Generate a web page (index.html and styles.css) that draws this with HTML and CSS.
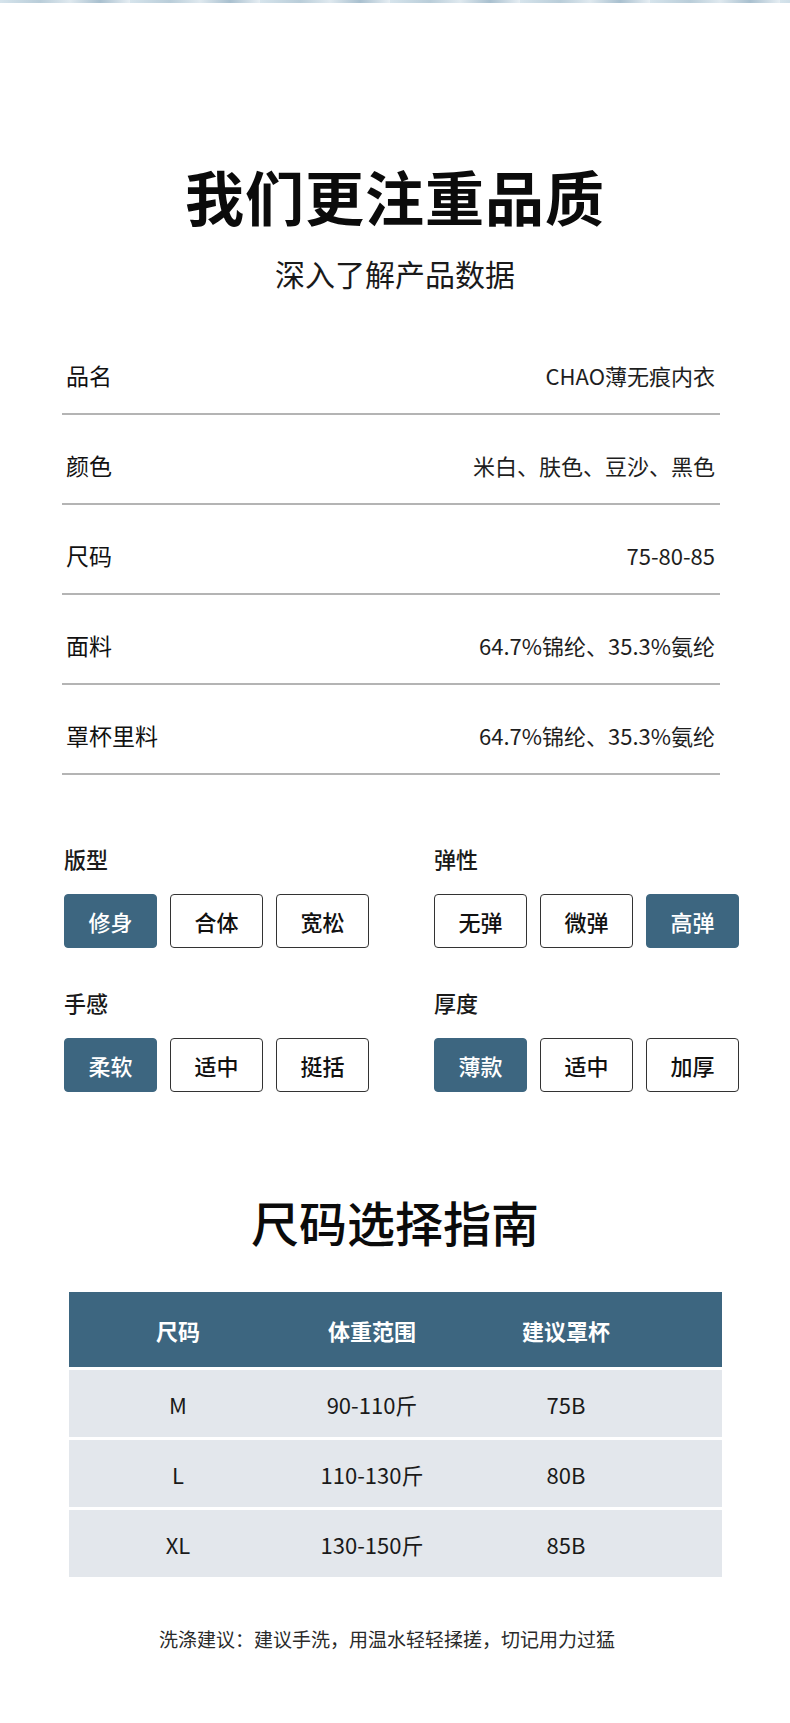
FILE: index.html
```html
<!DOCTYPE html>
<html lang="zh-CN">
<head>
<meta charset="utf-8">
<title>我们更注重品质</title>
<link rel="stylesheet" href="styles.css">
</head>
<body>
<div class="page">
  <div class="top-stripe"></div>

  <header class="hero">
    <h1 class="hero-title">我们更注重品质</h1>
    <p class="hero-sub">深入了解产品数据</p>
  </header>

  <section class="specs">
    <div class="spec-row"><span class="spec-label">品名</span><span class="spec-value">CHAO薄无痕内衣</span></div>
    <div class="spec-row"><span class="spec-label">颜色</span><span class="spec-value">米白、肤色、豆沙、黑色</span></div>
    <div class="spec-row"><span class="spec-label">尺码</span><span class="spec-value">75-80-85</span></div>
    <div class="spec-row"><span class="spec-label">面料</span><span class="spec-value">64.7%锦纶、35.3%氨纶</span></div>
    <div class="spec-row"><span class="spec-label">罩杯里料</span><span class="spec-value">64.7%锦纶、35.3%氨纶</span></div>
  </section>

  <section class="options">
    <div class="opt-group">
      <div class="opt-label">版型</div>
      <div class="opt-buttons">
        <span class="opt-btn is-active">修身</span>
        <span class="opt-btn">合体</span>
        <span class="opt-btn">宽松</span>
      </div>
    </div>
    <div class="opt-group">
      <div class="opt-label">弹性</div>
      <div class="opt-buttons">
        <span class="opt-btn">无弹</span>
        <span class="opt-btn">微弹</span>
        <span class="opt-btn is-active">高弹</span>
      </div>
    </div>
    <div class="opt-group">
      <div class="opt-label">手感</div>
      <div class="opt-buttons">
        <span class="opt-btn is-active">柔软</span>
        <span class="opt-btn">适中</span>
        <span class="opt-btn">挺括</span>
      </div>
    </div>
    <div class="opt-group">
      <div class="opt-label">厚度</div>
      <div class="opt-buttons">
        <span class="opt-btn is-active">薄款</span>
        <span class="opt-btn">适中</span>
        <span class="opt-btn">加厚</span>
      </div>
    </div>
  </section>

  <h2 class="guide-title">尺码选择指南</h2>

  <div class="size-table">
    <div class="size-row size-head"><span>尺码</span><span>体重范围</span><span>建议罩杯</span></div>
    <div class="size-row"><span>M</span><span>90-110斤</span><span>75B</span></div>
    <div class="size-row"><span>L</span><span>110-130斤</span><span>80B</span></div>
    <div class="size-row"><span>XL</span><span>130-150斤</span><span>85B</span></div>
  </div>

  <p class="care">洗涤建议：建议手洗，用温水轻轻揉搓，切记用力过猛</p>
</div>
</body>
</html>
```
FILE: styles.css
```css
* { box-sizing: border-box; }

html, body {
  margin: 0;
  padding: 0;
  background: #ffffff;
}

body {
  font-family: "Noto Sans CJK SC", "Noto Sans", sans-serif;
  color: #111;
}

.page {
  width: 790px;
  min-height: 1723px;
  display: flex;
  flex-direction: column;
}

.top-stripe {
  height: 3px;
  background: repeating-linear-gradient(90deg,
    #d6e4ec 0px, #b9cdd9 40px, #dfe9ef 70px, #a9c0cf 100px, #e6eef3 130px);
}

.hero {
  display: flex;
  flex-direction: column;
  align-items: center;
  padding-top: 158px;
}

.hero-title {
  margin: 0;
  font-size: 59px;
  line-height: 70px;
  font-weight: 700;
  letter-spacing: 1px;
  color: #0b0b0b;
}

.hero-sub {
  margin: 22px 0 0;
  font-size: 30px;
  line-height: 40px;
  font-weight: 400;
  color: #1a1a1a;
}

.specs {
  margin: 32px 70px 0 62px;
  display: flex;
  flex-direction: column;
}

.spec-row {
  display: flex;
  justify-content: space-between;
  align-items: center;
  height: 90px;
  padding: 38px 5px 26px 4px;
  border-bottom: 2px solid #b4b4b4;
}

.spec-label {
  font-size: 23px;
  line-height: 24px;
  color: #111;
}

.spec-value {
  font-size: 22px;
  line-height: 24px;
  font-weight: 400;
  color: #1e1e1e;
}

.options {
  margin: 68px 0 0 64px;
  display: grid;
  grid-template-columns: 305px 305px;
  column-gap: 65px;
  row-gap: 39px;
}

.opt-label {
  font-size: 22px;
  line-height: 30px;
  font-weight: 500;
  color: #1a1a1a;
}

.opt-buttons {
  margin-top: 21px;
  display: flex;
  gap: 13px;
}

.opt-btn {
  width: 93px;
  height: 54px;
  display: flex;
  align-items: center;
  justify-content: center;
  border: 1px solid #333;
  border-radius: 4px;
  font-size: 22px;
  font-weight: 500;
  color: #111;
  background: #fff;
}

.opt-btn.is-active {
  background: #3d6680;
  border-color: #3d6680;
  color: #fff;
}

.guide-title {
  margin: 99px 0 0;
  text-align: center;
  font-size: 48px;
  line-height: 60px;
  font-weight: 500;
  color: #0b0b0b;
}

.size-table {
  margin: 41px 0 0 69px;
  width: 653px;
  display: flex;
  flex-direction: column;
  gap: 3px;
}

.size-row {
  height: 67px;
  padding-left: 12px;
  display: grid;
  grid-template-columns: 194px 194px 194px;
  align-items: center;
  background: #e3e7ec;
  font-size: 22px;
  color: #1a1a1a;
}

.size-row span {
  text-align: center;
}

.size-head {
  height: 75px;
  background: #3d6680;
  color: #fff;
  font-weight: 700;
}

.care {
  margin: 48px 16px 0 0;
  text-align: center;
  font-size: 19px;
  line-height: 28px;
  color: #2a2a2a;
}
```
